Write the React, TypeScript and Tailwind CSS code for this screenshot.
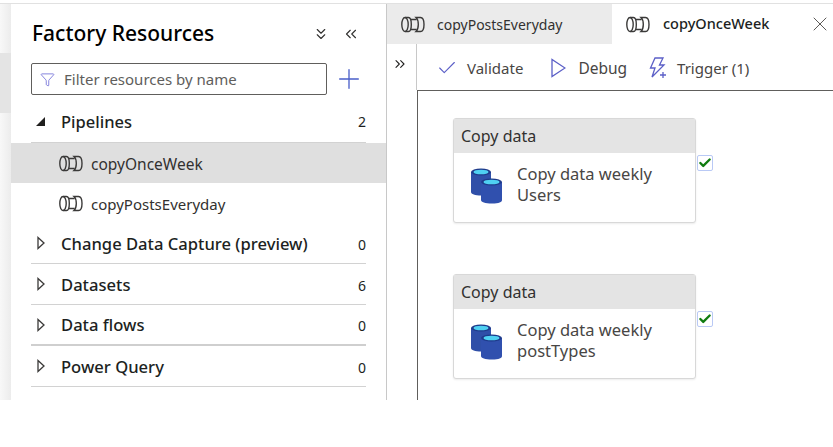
import React from 'react';
import { Check, ChevronsDown, ChevronsLeft, ChevronsRight, Filter, Plus, X } from 'lucide-react';

const font = 'font-["Noto_Sans","Open_Sans",sans-serif]';

const PipelineIcon = ({ className = '' }: { className?: string }) => (
  <svg viewBox="0 0 24 17" width="24" height="17" fill="none" stroke="#3b3a39" strokeWidth="1.400" className={className}>
    <ellipse cx="4" cy="8.500" rx="3.200" ry="7" />
    <path d="M4 1.500h3.500c1.600 0 2.800 3 2.800 7s-1.200 7-2.800 7H4" />
    <path d="M9.500 3.500h6M9.500 13.500h6" />
    <path d="M15 1.500h4.500c2 0 3.500 3 3.500 7s-1.500 7-3.500 7H15c1.700-1.600 2.300-4.500 2.300-7S16.700 3.100 15 1.500z" />
  </svg>
);

const CollapsedCaret = () => (
  <svg viewBox="0 0 8 14" width="8" height="14" fill="none" stroke="#3b3a39" strokeWidth="1.300">
    <path d="M1 1.500v11l6-5.500z" />
  </svg>
);

const DatabaseIcon = () => (
  <svg viewBox="0 0 32 36" width="32" height="36">
    <path d="M0 4v20c0 2 4 3.500 10 3.500s10-1.500 10-3.500V4z" fill="#2f4fa8" />
    <ellipse cx="10" cy="4" rx="10" ry="3.500" fill="#1e3a8a" />
    <ellipse cx="10" cy="4" rx="7.500" ry="2.300" fill="#4fd0f2" />
    <path d="M10 14v18c0 2 4 3.500 11 3.500S31 34 31 32V14z" fill="#3050ae" />
    <ellipse cx="20.500" cy="14" rx="10.500" ry="3.500" fill="#1e3a8a" />
    <ellipse cx="20.500" cy="14" rx="8" ry="2.300" fill="#4fd0f2" />
  </svg>
);

const TriggerIcon = () => (
  <svg viewBox="0 0 20 22" width="20" height="22" fill="none" stroke="#5b5fc7" strokeWidth="1.300">
    <path d="M7 1h8l-3.500 7H16L4 20l3-9H2.500z" />
    <path d="M15 15v6M12 18h6" />
  </svg>
);

const PlayIcon = () => (
  <svg viewBox="0 0 16 20" width="16" height="20" fill="none" stroke="#5b5fc7" strokeWidth="1.300">
    <path d="M2 1.500v17L15 10z" />
  </svg>
);

interface SectionProps {
  label: string;
  count: number;
  thick?: boolean;
}

const Section = ({ label, count, thick }: SectionProps) => (
  <div className={`mx-[20px] h-[41px] flex items-center text-[#201f1e] ${thick ? 'border-b-2 border-[#cfcfcf]' : 'border-b border-[#d2d2d2]'}`}>
    <span className="w-[10px] ml-[6px] flex"><CollapsedCaret /></span>
    <span className="ml-[14px] pt-[2px] flex-1 text-[16.600px] font-medium">{label}</span>
    <span className="pt-[2px] text-[14px]">{count}</span>
  </div>
);

const ActivityCard = ({ name }: { name: string }) => (
  <div className="relative w-[243px] h-[105px] rounded-[3px] border border-[#d8d8d8] bg-white shadow-[0_1px_2px_rgba(0,0,0,0.08)]">
    <div className="h-[34px] bg-[#e4e4e4] px-[7px] flex items-center text-[16px] text-[#323130]">Copy data</div>
    <div className="flex pl-[17px] pt-[10px]">
      <div className="mt-[5px]"><DatabaseIcon /></div>
      <div className="ml-[14px] text-[16.500px] leading-[21px] text-[#484644]">
        Copy data weekly<br />{name}
      </div>
    </div>
    <div className="absolute left-[243px] top-[36px] w-[16px] h-[16px] bg-white border border-[#b9c9f5] rounded-[2px] flex items-center justify-center">
      <Check size={14} strokeWidth={4} color="#107c10" />
    </div>
  </div>
);

export default function App() {
  return (
    <div className={`w-[833px] h-[447px] bg-white overflow-hidden ${font}`}>
      <div className="h-[4px] border-b border-[#e1e1e1]" />
      <div className="h-[396px] flex">
        <div className="w-[11px] bg-gradient-to-r from-[#f8f8f8] to-[#ececec] flex flex-col">
          <div className="mt-[49px] h-[60px] bg-[#e4e4e4]" />
        </div>
        <div className="w-[376px] border-r border-[#c8c8c8] flex flex-col">
          <div className="h-[48px] pl-[21px] pr-[26px] flex items-center justify-between mt-[6px]">
            <span className="text-[21px] font-medium text-black">Factory Resources</span>
            <div className="flex items-center gap-[12px] text-[#323130]">
              <ChevronsDown size={18} strokeWidth={1.500} />
              <ChevronsLeft size={18} strokeWidth={1.500} />
            </div>
          </div>
          <div className="flex items-center pl-[20px] mt-[5px]">
            <div className="w-[296px] h-[32px] border border-[#605e5c] rounded-[2px] flex items-center px-[8px]">
              <Filter size={15} strokeWidth={1.300} color="#6b69d6" />
              <span className="ml-[9px] text-[15px] text-[#605e5c]">Filter resources by name</span>
            </div>
            <Plus size={32} strokeWidth={1} color="#4a5fc9" className="ml-[6px]" />
          </div>
          <div className="mx-[20px] h-[44px] mt-[4px] flex items-center border-b border-[#d2d2d2] text-[#201f1e]">
            <span className="ml-[5px] mt-[2px] w-0 h-0 border-l-[9px] border-l-transparent border-b-[9px] border-b-[#201f1e]" />
            <span className="ml-[16px] pt-[4px] flex-1 text-[16.500px] font-medium">Pipelines</span>
            <span className="pt-[2px] text-[14px]">2</span>
          </div>
          <div className="h-[40px] bg-[#dfdfdf] flex items-center pl-[48px] pt-[1px] text-[#323130]">
            <PipelineIcon />
            <span className="ml-[8px] pt-[2px] text-[15.500px]">copyOnceWeek</span>
          </div>
          <div className="h-[40px] flex items-center pl-[48px] pt-[1px] text-[#323130]">
            <PipelineIcon />
            <span className="ml-[8px] pt-[2px] text-[15px]">copyPostsEveryday</span>
          </div>
          <Section label="Change Data Capture (preview)" count={0} />
          <Section label="Datasets" count={6} />
          <Section label="Data flows" count={0} thick />
          <Section label="Power Query" count={0} />
        </div>
        <div className="flex-1 flex flex-col min-w-0">
          <div className="h-[40px] flex">
            <div className="w-[225px] bg-[#ebebeb] flex items-center pl-[14px]">
              <PipelineIcon />
              <span className="ml-[12px] text-[14px] text-[#323130]">copyPostsEveryday</span>
            </div>
            <div className="flex-1 flex items-center pl-[14px] pr-[1px]">
              <PipelineIcon />
              <span className="ml-[13px] flex-1 text-[14.500px] font-medium text-[#201f1e]">copyOnceWeek</span>
              <X size={24} strokeWidth={0.900} color="#484644" />
            </div>
          </div>
          <div className="flex-1 flex min-h-0">
            <div className="w-[30px] border-r border-[#c8c8c8] flex justify-start pl-[5px] pt-[12px] h-[46px]">
              <ChevronsRight size={16} strokeWidth={1.600} color="#201f1e" />
            </div>
            <div className="flex-1 flex flex-col">
              <div className="h-[46px] pt-[2px] flex items-center pl-[20px] text-[15px] text-[#484644]">
                <Check size={22} strokeWidth={1.200} color="#5b5fc7" className="-ml-[1px]" />
                <span className="ml-[9px]">Validate</span>
                <span className="ml-[27px] flex"><PlayIcon /></span>
                <span className="ml-[12px] pt-[2px] text-[15.500px]">Debug</span>
                <span className="ml-[21px] flex"><TriggerIcon /></span>
                <span className="ml-[9px]">Trigger (1)</span>
              </div>
              <div className="flex-1 border-t border-l border-[#605e5c] pl-[35px] pt-[27px] flex flex-col gap-[51px]">
                <ActivityCard name="Users" />
                <ActivityCard name="postTypes" />
              </div>
            </div>
          </div>
        </div>
      </div>
    </div>
  );
}
